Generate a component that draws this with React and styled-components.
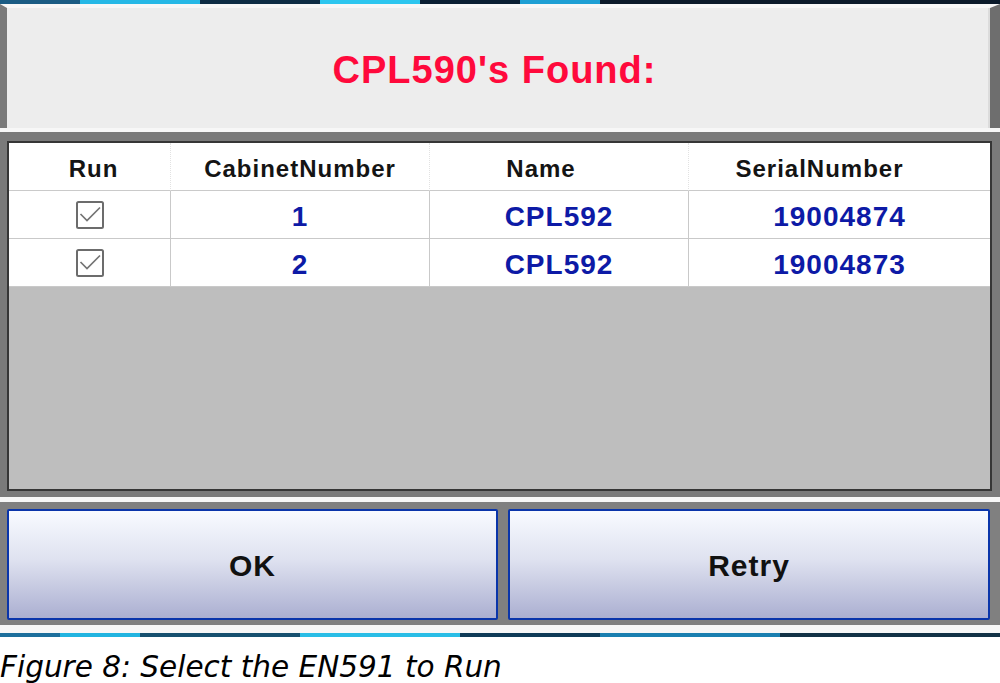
import React from "react";
import styled, { createGlobalStyle } from "styled-components";

const title = "CPL590's Found:";

const columns = [
  { label: "Run", padLeft: 8, padRight: 0 },
  { label: "CabinetNumber", padLeft: 0, padRight: 0 },
  { label: "Name", padLeft: 0, padRight: 36 },
  { label: "SerialNumber", padLeft: 0, padRight: 40 },
];

const rows = [
  { run: true, cabinet: "1", name: "CPL592", serial: "19004874" },
  { run: true, cabinet: "2", name: "CPL592", serial: "19004873" },
];

const caption = "Figure 8: Select the EN591 to Run";

const CheckBox = () => (
  <svg width="28" height="28" viewBox="0 0 28 28">
    <rect x="1" y="1" width="26" height="26" rx="1.5" fill="#fff" stroke="#6c6c6c" strokeWidth="2" />
    <polyline points="4.5,13 11,19.5 24,6.5" fill="none" stroke="#747474" strokeWidth="1.7" />
  </svg>
);

const App = () => {
  return (
    <Root>
      <GlobalStyle />
      <ScreenStrip />
      <Header>
        <Title>{title}</Title>
      </Header>
      <Divider $height={4} />
      <GridFrame>
        <Grid>
          <Table>
            {columns.map((col) => (
              <HeadCell key={col.label} $padLeft={col.padLeft} $padRight={col.padRight}>
                {col.label}
              </HeadCell>
            ))}
            {rows.map((row, i) => (
              <React.Fragment key={i}>
                <Cell $check>{row.run && <CheckBox />}</Cell>
                <Cell>{row.cabinet}</Cell>
                <Cell>{row.name}</Cell>
                <Cell $last>{row.serial}</Cell>
              </React.Fragment>
            ))}
          </Table>
        </Grid>
      </GridFrame>
      <Divider $height={5} />
      <ButtonBar>
        <Button $width={491}>OK</Button>
        <Button $width={482}>Retry</Button>
      </ButtonBar>
      <Divider $height={8} />
      <ScreenStrip $bottom />
      <Caption>{caption}</Caption>
    </Root>
  );
};

export default App;

const GlobalStyle = createGlobalStyle`
  body {
    margin: 0;
    background: #fff;
  }
`;

const Root = styled.div`
  width: 1000px;
  display: flex;
  flex-direction: column;
  font-family: "Liberation Sans", Arial, sans-serif;
`;

const ScreenStrip = styled.div`
  height: 4px;
  background: ${({ $bottom }) =>
    $bottom
      ? "linear-gradient(90deg, #1d6f9c 0 6%, #22b4e0 6% 14%, #17506f 14% 30%, #29bde6 30% 46%, #0f3b57 46% 60%, #1a7fb0 60% 78%, #123246 78% 100%)"
      : "linear-gradient(90deg, #1b5c84 0 8%, #25b8e6 8% 20%, #0d2c44 20% 32%, #2cc6ef 32% 42%, #0a1f33 42% 52%, #1e9fd4 52% 60%, #0b1a2a 60% 100%)"};
`;

const Header = styled.div`
  height: 120px;
  background: #ededed;
  border-top: 4px solid #f7f7f7;
  border-left: 7px solid #7a7a7a;
  border-right: 10px solid #6e6e6e;
  box-shadow: inset -2px 0 0 #dcdcdc;
  display: flex;
  align-items: center;
  justify-content: center;
`;

const Title = styled.h1`
  margin: 0;
  padding: 5px 8px 0 0;
  font-size: 38px;
  font-weight: bold;
  letter-spacing: 1px;
  color: #ff0a3c;
`;

const Divider = styled.div`
  height: ${({ $height }) => $height}px;
  background: #f7f7f7;
`;

const GridFrame = styled.div`
  background: #7a7a7a;
  padding: 9px 8px 6px 7px;
`;

const Grid = styled.div`
  height: 346px;
  border: 2px solid #363636;
  background: #bebebe;
`;

const Table = styled.div`
  display: grid;
  grid-template-columns: 162px 259px 259px 1fr;
  grid-auto-rows: 48px;
  background: #fff;
`;

const HeadCell = styled.div`
  display: flex;
  align-items: center;
  justify-content: center;
  padding-top: 4px;
  padding-left: ${({ $padLeft }) => $padLeft}px;
  padding-right: ${({ $padRight }) => $padRight}px;
  border-right: 1px dotted #e2e2e2;
  border-bottom: 1px solid #cacaca;
  font-size: 24px;
  font-weight: bold;
  letter-spacing: 1px;
  color: #141414;

  &:nth-child(4) {
    border-right: none;
  }
`;

const Cell = styled.div`
  display: flex;
  align-items: center;
  justify-content: center;
  padding-top: ${({ $check }) => ($check ? 1 : 4)}px;
  border-right: ${({ $last }) => ($last ? "none" : "1px solid #c9c9c9")};
  border-bottom: 1px solid #c9c9c9;
  font-size: 28px;
  font-weight: bold;
  letter-spacing: 1px;
  color: #0d1aa6;
`;

const ButtonBar = styled.div`
  display: flex;
  gap: 10px;
  padding: 7px 10px 5px 7px;
  background: #808080;
`;

const Button = styled.button`
  width: ${({ $width }) => $width}px;
  height: 111px;
  padding: 2px 0 0;
  border: 2px solid #0a35aa;
  border-radius: 2px;
  background: linear-gradient(180deg, #f8faff 0%, #dfe2f0 45%, #abafd1 100%);
  font-family: "Liberation Sans", Arial, sans-serif;
  font-size: 30px;
  font-weight: bold;
  letter-spacing: 1px;
  color: #111;
  cursor: pointer;
`;

const Caption = styled.p`
  margin: 13px 0 0;
  padding-left: 0;
  font-family: "DejaVu Sans", Verdana, sans-serif;
  font-style: italic;
  font-size: 29.5px;
  line-height: 34px;
  color: #000;
`;
